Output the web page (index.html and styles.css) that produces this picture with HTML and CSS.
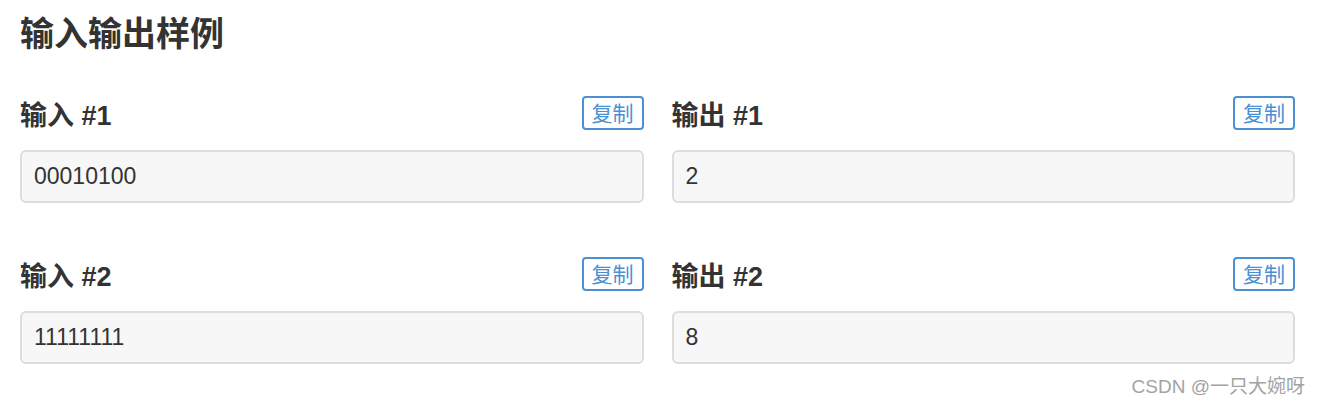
FILE: index.html
```html
<!DOCTYPE html>
<html lang="zh-CN">
  <head>
    <meta charset="UTF-8" />
    <title>输入输出样例</title>
    <link rel="stylesheet" href="styles.css">
  </head>
  <body>
    <div class="page">
      <h2 class="title">输入输出样例</h2>

      <!-- 样例列表：左边输入，右边输出 -->
      <div class="samples">
        <div class="sample">
          <div class="sample-head">
            <h3>输入 #1</h3>
            <button class="copy">复制</button>
          </div>
          <pre class="data">00010100</pre>
        </div>
        <div class="sample">
          <div class="sample-head">
            <h3>输出 #1</h3>
            <button class="copy">复制</button>
          </div>
          <pre class="data">2</pre>
        </div>
        <div class="sample">
          <div class="sample-head">
            <h3>输入 #2</h3>
            <button class="copy">复制</button>
          </div>
          <pre class="data">11111111</pre>
        </div>
        <div class="sample">
          <div class="sample-head">
            <h3>输出 #2</h3>
            <button class="copy">复制</button>
          </div>
          <pre class="data">8</pre>
        </div>
      </div>
    </div>

    <div class="watermark">CSDN @一只大婉呀</div>
  </body>
</html>
```

FILE: styles.css
```css
body {
  margin: 0;
  font-family: "Liberation Sans", "Noto Sans CJK SC", sans-serif;
  color: #333;
  background: #fff;
}
.page {
  padding: 14px 25px 0 20px;
}
.title {
  font-size: 34px;
  line-height: 40px;
  margin: 0 0 43px 0;
  font-weight: bold;
}
.samples {
  display: grid;
  grid-template-columns: 1fr 1fr;
  column-gap: 28px;
  row-gap: 55px;
}
.sample-head {
  display: flex;
  justify-content: space-between;
  align-items: flex-end;
  height: 33px;
  margin-bottom: 20px;
}
.sample-head h3 {
  margin: 0 0 -1px 0;
  font-size: 27px;
  line-height: 30px;
  font-weight: bold;
}
.copy {
  font-family: "Liberation Sans", "Noto Sans CJK SC", sans-serif;
  font-size: 21px;
  line-height: 29px;
  height: 34px;
  padding: 0 8px;
  color: #4a90d2;
  background: #fff;
  border: 2px solid #4a90d2;
  border-radius: 4px;
  cursor: pointer;
}
.data {
  margin: 0;
  height: 53px;
  box-sizing: border-box;
  padding: 0 12px;
  line-height: 49px;
  font-family: "Liberation Sans", "Noto Sans CJK SC", sans-serif;
  font-size: 23px;
  color: #333;
  background: #f7f7f7;
  border: 2px solid #ddd;
  border-radius: 6px;
}
.watermark {
  position: absolute;
  right: 15px;
  top: 371px;
  font-size: 19px;
  color: #a3a3a3;
}
```
